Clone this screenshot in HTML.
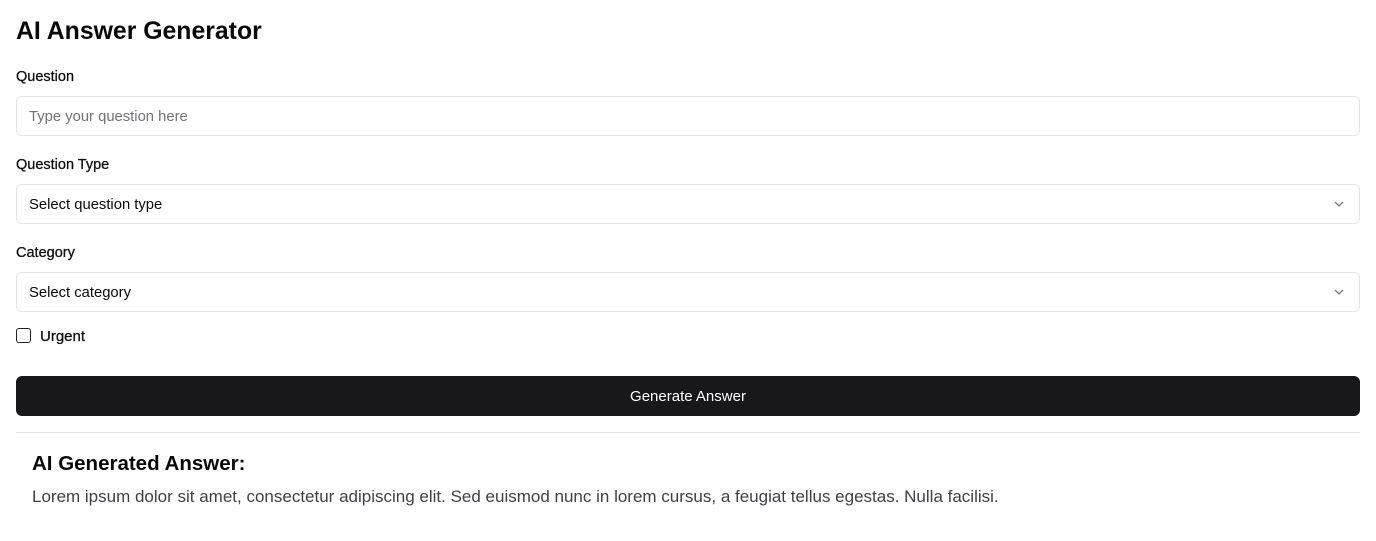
<!DOCTYPE html>
<html><head><style>
body{margin:0;background:#fff;font-family:"Liberation Sans",sans-serif;color:#09090b;width:1376px;height:541px;overflow:hidden;position:relative}
.a{position:absolute}
.lbl{left:16px;font-size:14.5px;color:#111;-webkit-text-stroke:0.3px #111}
.box{left:16px;width:1342px;height:38px;border:1px solid #e4e4e7;border-radius:6px;font-size:14.8px;line-height:40px;text-indent:12px;box-sizing:content-box}
.chev{position:absolute;right:14px;top:13px}
</style></head><body>
<div class="a" style="left:16px;top:18px;font-size:24.8px;font-weight:bold">AI Answer Generator</div>
<div class="a lbl" style="top:69px">Question</div>
<div class="a box" style="top:96px;color:#71717a">Type your question here</div>
<div class="a lbl" style="top:157px">Question Type</div>
<div class="a box" style="top:184px">Select question type<svg class="chev" width="12" height="12" viewBox="0 0 12 12"><path d="M2 4l4 4 4-4" fill="none" stroke="#777" stroke-width="1.3"/></svg></div>
<div class="a lbl" style="top:245px">Category</div>
<div class="a box" style="top:272px">Select category<svg class="chev" width="12" height="12" viewBox="0 0 12 12"><path d="M2 4l4 4 4-4" fill="none" stroke="#777" stroke-width="1.3"/></svg></div>
<div class="a" style="left:16px;top:328px;width:13px;height:13px;border:1.5px solid #222;border-radius:3px"></div>
<div class="a lbl" style="left:40px;top:328px;font-size:15px">Urgent</div>
<div class="a" style="left:16px;top:376px;width:1344px;height:40px;background:#18181b;border-radius:6px;color:#fff;font-size:15px;line-height:41px;text-align:center">Generate Answer</div>
<div class="a" style="left:16px;top:432px;width:1344px;height:1px;background:#e4e4e7"></div>
<div class="a" style="left:32px;top:452px;font-size:20.5px;font-weight:bold">AI Generated Answer:</div>
<div class="a" style="left:32px;top:487px;font-size:17px;color:#3f3f46">Lorem ipsum dolor sit amet, consectetur adipiscing elit. Sed euismod nunc in lorem cursus, a feugiat tellus egestas. Nulla facilisi.</div>
</body></html>
